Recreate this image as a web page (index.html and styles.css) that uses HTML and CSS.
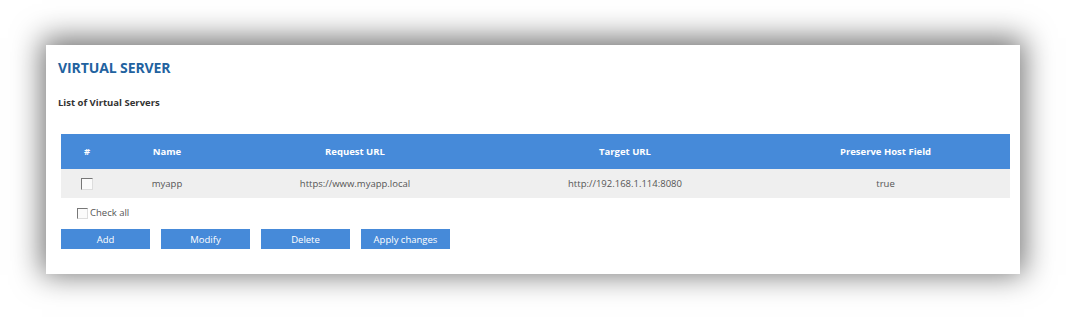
FILE: index.html
```html
<!DOCTYPE html>
<html lang="en">
<head>
  <meta charset="UTF-8" />
  <title>Virtual Server</title>
  <link rel="stylesheet" href="styles.css">
</head>
<body>
  <div class="panel">
    <h2 class="title">VIRTUAL SERVER</h2>
    <h4 class="subtitle">List of Virtual Servers</h4>

    <!-- server list -->
    <table class="vs-table">
      <thead>
        <tr>
          <th class="c-num">#</th>
          <th class="c-name">Name</th>
          <th class="c-req">Request URL</th>
          <th class="c-tgt">Target URL</th>
          <th>Preserve Host Field</th>
        </tr>
      </thead>
      <tbody>
        <tr>
          <td><input type="checkbox" class="chk"></td>
          <td>myapp</td>
          <td>https://www.myapp.local</td>
          <td>http://192.168.1.114:8080</td>
          <td>true</td>
        </tr>
      </tbody>
    </table>

    <label class="check-all"><input type="checkbox" class="chk">Check all</label>

    <div class="actions">
      <button>Add</button>
      <button>Modify</button>
      <button>Delete</button>
      <button>Apply changes</button>
    </div>
  </div>
</body>
</html>
```

FILE: styles.css
```css
body {
  margin: 0;
  padding: 45px 46px;
  background: #fff;
  font-family: 'Open Sans', 'Noto Sans', sans-serif;
}
.panel {
  width: 974px;
  height: 229px;
  box-sizing: border-box;
  padding: 13px 10px 0 12px;
  background: #fff;
  box-shadow: 0 -3px 28px 4px rgba(0,0,0,0.55);
}
.title {
  margin: 0;
  font-size: 14px;
  line-height: 20px;
  color: #22629f;
  font-weight: 700;
  letter-spacing: -0.1px;
}
.subtitle {
  margin: 18px 0 0;
  font-size: 9.5px;
  line-height: 14px;
  color: #333;
  font-weight: 700;
}
.vs-table {
  width: 949px;
  margin: 24px 0 0 3px;
  border-collapse: collapse;
  font-size: 9.5px;
}
.vs-table th {
  height: 35px;
  padding: 0;
  background: #468ad9;
  color: #fff;
  font-weight: 700;
  text-align: center;
}
.vs-table td {
  height: 29px;
  padding: 0;
  background: #efefef;
  color: #555;
  text-align: center;
}
.c-num { width: 52px; }
.c-name { width: 108px; }
.c-req { width: 268px; }
.c-tgt { width: 272px; }
.chk {
  appearance: none;
  -webkit-appearance: none;
  width: 12px;
  height: 12px;
  margin: 0;
  background: #fbfbfb;
  border: 1px solid;
  border-color: #777 #ddd #ddd #777;
  vertical-align: middle;
}
.check-all {
  display: flex;
  align-items: flex-end;
  gap: 2px;
  margin: 9px 0 0 19px;
  font-size: 9.5px;
  color: #555;
  height: 12px;
  line-height: 12px;
}
.check-all .chk {
  width: 11px;
  height: 11px;
}
.actions {
  display: flex;
  gap: 11px;
  margin: 10px 0 0 3px;
}
.actions button {
  width: 89px;
  height: 20px;
  padding: 0;
  border: none;
  background: #468ad9;
  color: #fff;
  font-family: inherit;
  font-size: 9.5px;
}
```
